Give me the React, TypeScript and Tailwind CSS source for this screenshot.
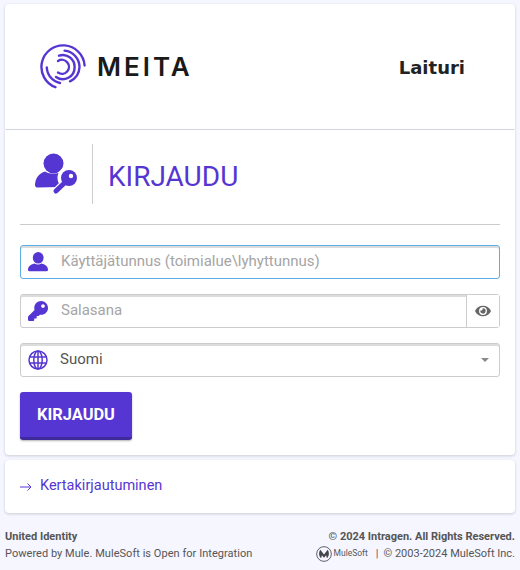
import React from "react";
import { FaKey, FaEye } from "react-icons/fa";

const Logo = () => (
  <svg width="46" height="46" viewBox="0 0 46 46" fill="none" stroke="#5636d3" strokeWidth="2.4" strokeLinecap="round">
    <path d="M44.6 21.5 A21.6 21.6 0 1 0 15.5 43.2" />
    <path d="M6.8 23.5 A16.5 16.5 0 0 0 20 39" />
    <path d="M24.6 6.6 A16.6 16.6 0 0 1 39.5 23 A16.5 16.5 0 0 1 30 37.3" />
    <path d="M19 11.7 A11.8 11.8 0 0 1 34.6 23 A11.8 11.8 0 0 1 16 33" />
    <path d="M18 17 A7 7 0 1 1 18 28.6" />
  </svg>
);

const UserKey = () => (
  <svg width="44" height="44" viewBox="34 152 44 44">
    <circle cx="53.500" cy="163.500" r="10" fill="#5636d3" />
    <path d="M35 184.500 C35.500 178 39 173.500 45 171.500 C50 174.500 57 174.500 62 171.500 C66 173 69 175 71 178 L60 187 L37 187.500 C35.500 187.500 35 186 35 184.500 z" fill="#5636d3" />
    <g stroke="#ffffff" strokeWidth="7" strokeLinecap="round" fill="#ffffff">
      <circle cx="69" cy="178" r="8" />
      <path d="M64 183 L56 191" />
    </g>
    <circle cx="69" cy="178" r="8" fill="#5636d3" />
    <path d="M65 182.500 L56 191" stroke="#5636d3" strokeWidth="5" strokeLinecap="round" />
    <circle cx="71" cy="176" r="2.200" fill="#ffffff" />
  </svg>
);

const User = () => (
  <svg width="20" height="20" viewBox="0 0 20 20" fill="#5636d3">
    <ellipse cx="10.200" cy="5.800" rx="5.400" ry="5.800" />
    <path d="M0 18c0-3.500 2-5.200 6.500-6.500 2 1.300 5 1.300 7 0C18 12.800 20 14.500 20 18c0 .7-.5 1.200-1.200 1.200H1.200C.5 19.200 0 18.700 0 18z" />
  </svg>
);

const Globe = () => (
  <svg width="20" height="20" viewBox="0 0 20 20" fill="none" stroke="#5636d3" strokeWidth="1.500">
    <circle cx="10" cy="10" r="9" />
    <ellipse cx="10" cy="10" rx="4.200" ry="9" />
    <path d="M10 1v18M1.500 7h17M1.500 13h17" />
  </svg>
);

const Mule = () => (
  <svg width="16" height="16" viewBox="0 0 17 17">
    <circle cx="8.500" cy="8.500" r="7.800" fill="none" stroke="#55565a" strokeWidth="1" />
    <path d="M4.600 4 L8.500 9 L12.400 4 C14.500 7 14 10.800 11.500 13 L10.800 9.800 L8.500 12.500 L6.200 9.800 L5.500 13 C3 10.800 2.500 7 4.600 4z" fill="#44454a" />
  </svg>
);

const Arrow = () => (
  <svg width="12" height="10" viewBox="0 0 12 10" fill="none" stroke="#5636d3" strokeWidth="1">
    <path d="M0 5h11M7.500 1.500 11 5 7.500 8.500" />
  </svg>
);

const shadow = "shadow-[0_1px_3px_rgba(0,0,0,0.18)]";
const field = "flex h-[34px] items-center rounded-[3px] border border-[#cccccc] shadow-[inset_0_2px_0_#dcdcdc]";

export default function App() {
  return (
    <div className="h-[570px] w-[520px] overflow-hidden bg-[#f5f6ff] pt-1 font-['Roboto',sans-serif]">
      <div className={`mx-[5px] flex h-[125px] w-[510px] items-center justify-between rounded-t-[4px] bg-white pr-[50px] pl-[35px] ${shadow}`}>
        <div className="flex items-center gap-[11px]">
          <Logo />
          <span className="font-['Inter',sans-serif] text-[26px] font-semibold tracking-[3px] text-[#1a1a1a]">MEITA</span>
        </div>
        <span className="mt-px font-['DejaVu_Sans',sans-serif] text-[18px] font-bold text-[#222222]">Laituri</span>
      </div>

      <div className={`mx-[5px] mt-px flex h-[325px] w-[510px] flex-col rounded-b-[4px] bg-white px-[15px] shadow-[0_1px_3px_rgba(0,0,0,0.18)]`}>
        <div className="flex h-[95px] items-start border-b border-[#cccccc] pt-[14px]">
          <div className="flex h-[60px] items-center pl-[14px]">
            <UserKey />
          </div>
          <div className="ml-[14px] h-[60px] w-px bg-[#cccccc]" />
          <span className="ml-[15px] mt-[15px] text-[28px] leading-[36px] text-[#5636d3]">KIRJAUDU</span>
        </div>

        <div className="mt-5 flex h-[34px] items-center rounded-[3px] border border-[#5dade2] shadow-[inset_0_2px_0_#dcdcdc]">
          <div className="ml-[7px]"><User /></div>
          <span className="-mt-[2px] ml-[13px] text-[15px] text-[#a5a5a5]">Käyttäjätunnus (toimialue\lyhyttunnus)</span>
        </div>

        <div className={`mt-[15px] ${field}`}>
          <FaKey className="ml-[7px] h-[20px] w-[20px] text-[#5636d3]" />
          <span className="-mt-[2px] ml-[13px] flex-1 text-[15px] text-[#a5a5a5]">Salasana</span>
          <div className="flex h-full w-[33px] items-center justify-center border-l border-[#cccccc] bg-white">
            <FaEye className="h-[14px] w-[16px] text-[#666666]" />
          </div>
        </div>

        <div className={`mt-[15px] ${field}`}>
          <div className="ml-[7px]"><Globe /></div>
          <span className="-mt-[2px] ml-3 flex-1 text-[15px] text-[#555555]">Suomi</span>
          <div className="mr-[10px] h-0 w-0 border-x-[4px] border-t-[4px] border-x-transparent border-t-[#888888]" />
        </div>

        <div className="mt-[15px] flex h-[48px] w-[112px] items-center justify-center rounded-[3px] border-b-[3px] border-[#3f2a9c] bg-[#5636d3] pt-[2px] text-[16.400px] font-bold text-white shadow-[0_1px_2px_rgba(0,0,0,0.3)]">
          KIRJAUDU
        </div>
      </div>

      <div className={`mx-[5px] mt-[5px] flex h-[53px] w-[510px] items-center rounded-[4px] bg-white px-[15px] text-[#5636d3] ${shadow}`}>
        <div className="w-[20px]"><Arrow /></div>
        <span className="-mt-[2px] text-[14.500px]">Kertakirjautuminen</span>
      </div>

      <div className="mt-[15px] flex justify-between px-[5px] text-[11px] leading-[17px] text-[#555555]">
        <div>
          <div className="font-bold">United Identity</div>
          <div className="tracking-[0.040px]">Powered by Mule. MuleSoft is Open for Integration</div>
        </div>
        <div className="flex flex-col items-end">
          <div className="font-bold">© 2024 Intragen. All Rights Reserved.</div>
          <div className="flex items-center">
            <Mule />
            <span className="ml-[2px] text-[8.500px] text-[#55565a]">MuleSoft</span>
            <span className="ml-2 text-[#884466]">|</span>
            <span className="ml-[5px]">© 2003-2024 MuleSoft Inc.</span>
          </div>
        </div>
      </div>
    </div>
  );
}
